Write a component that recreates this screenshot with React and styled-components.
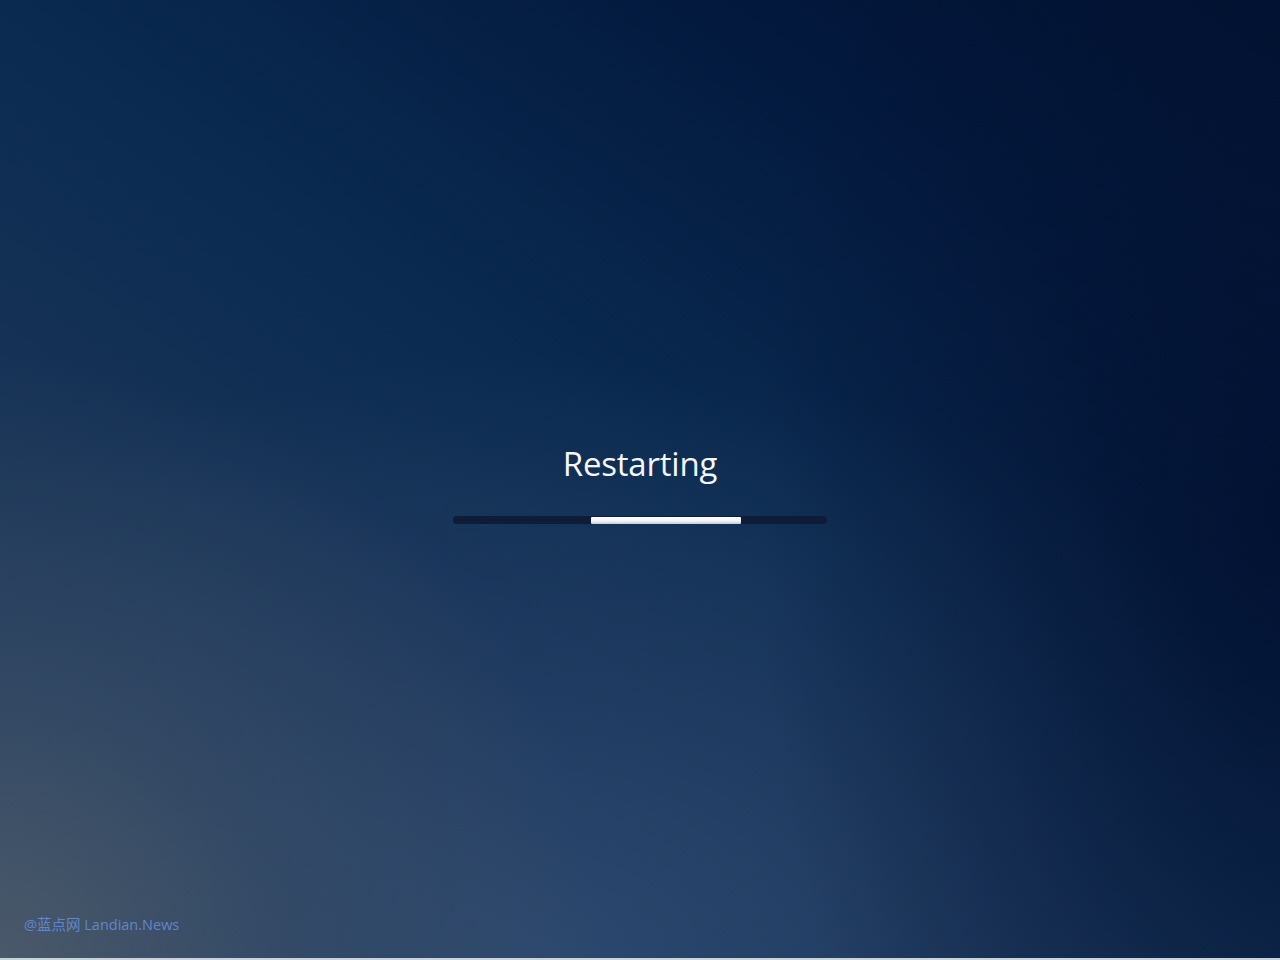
import React from "react";
import styled, { createGlobalStyle } from "styled-components";

const GlobalStyle = createGlobalStyle`
  html, body {
    margin: 0;
    padding: 0;
    background: #c9d1da;
  }
`;

const Screen = styled.div`
  width: 1280px;
  height: 958px;
  display: flex;
  flex-direction: column;
  align-items: center;
  font-family: "Open Sans", "Noto Sans", "Noto Sans CJK SC", sans-serif;
  background:
    radial-gradient(ellipse 520px 900px at 100% 55%, rgba(2, 16, 48, 0.85) 0%, rgba(4, 20, 52, 0.4) 55%, rgba(4, 20, 52, 0) 100%),
    radial-gradient(ellipse 600px 600px at 0% 100%, rgba(78, 92, 106, 0.9) 0%, rgba(64, 82, 102, 0.5) 45%, rgba(50, 70, 95, 0) 100%),
    radial-gradient(ellipse 900px 600px at 42% 100%, rgba(44, 72, 110, 1) 0%, rgba(38, 64, 102, 0.6) 50%, rgba(30, 55, 95, 0) 100%),
    linear-gradient(215deg, #00102f 0%, #03193e 22%, #0a2a50 48%, #1a3558 75%, #2b4263 100%);
`;

const Center = styled.div`
  margin-top: 441px;
  display: flex;
  flex-direction: column;
  align-items: center;
`;

const Title = styled.div`
  color: #f4f6fa;
  font-size: 33px;
  line-height: 46px;
  letter-spacing: -0.2px;
`;

const Track = styled.div`
  margin-top: 29px;
  width: 374px;
  height: 8px;
  border-radius: 4px;
  background: #0e1c37;
  display: flex;
  align-items: center;
  padding-left: 138px;
  box-sizing: border-box;
`;

const Fill = styled.div`
  height: 7px;
  border-radius: 1px;
  background: linear-gradient(to bottom, #ffffff 0%, #f2f4f7 55%, #c6ccd4 100%);
`;

const Footer = styled.div`
  margin-top: auto;
  align-self: flex-start;
  padding: 0 0 24px 24px;
  color: #5f86cc;
  font-size: 14.5px;
  line-height: 18px;
`;

export default function App() {
  return (
    <>
      <GlobalStyle />
      <Screen>
        <Center>
          <Title>Restarting</Title>
          <Track>
            <Fill style={{ width: 150 }} />
          </Track>
        </Center>
        <Footer>@蓝点网 Landian.News</Footer>
      </Screen>
    </>
  );
}
